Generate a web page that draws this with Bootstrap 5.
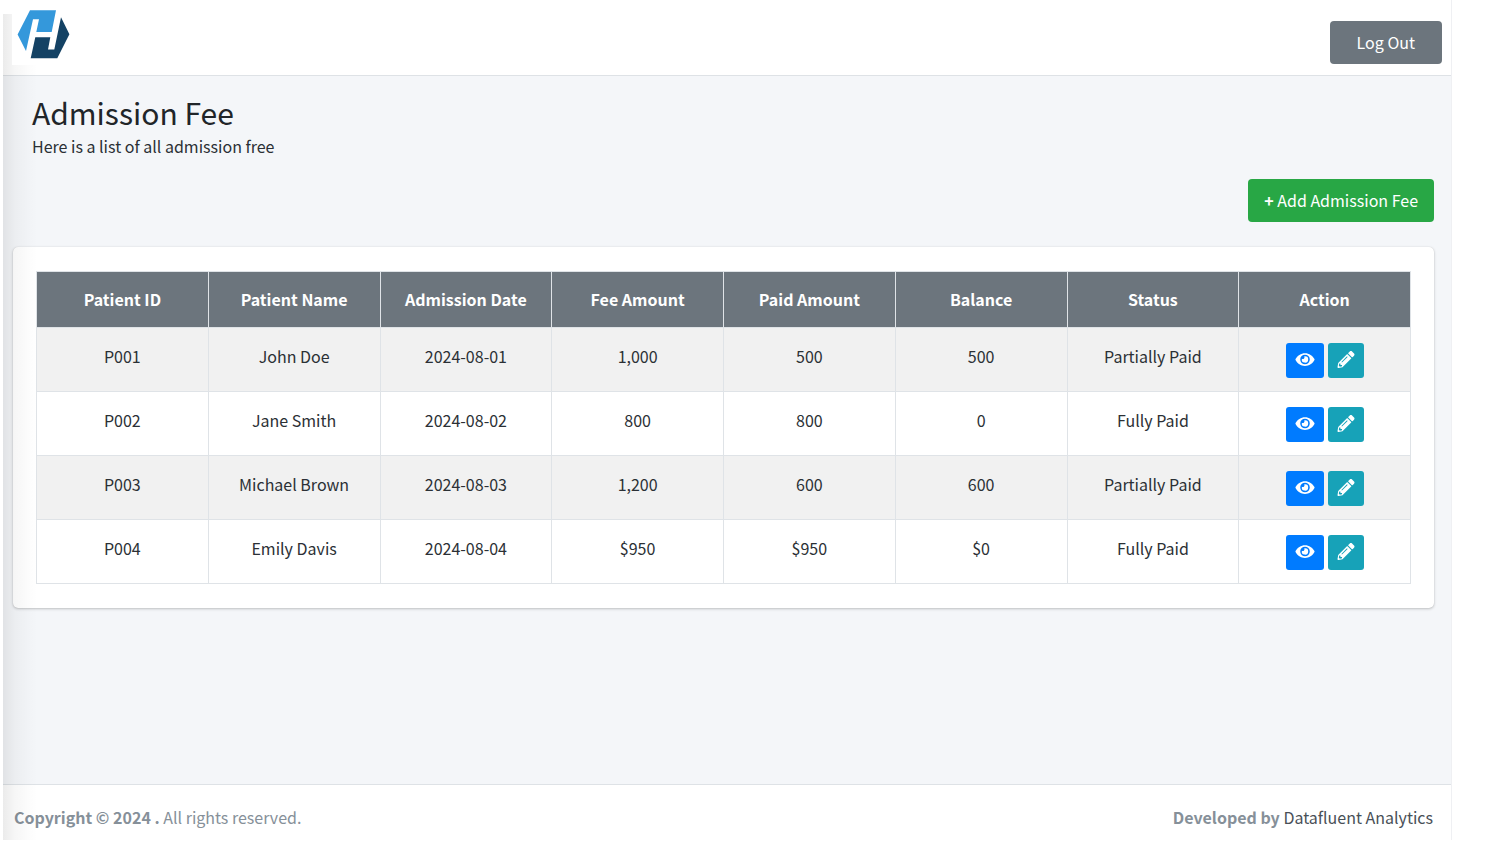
<!DOCTYPE html>
<html lang="en">
<head>
<meta charset="utf-8">
<meta name="viewport" content="width=device-width, initial-scale=1">
<title>Admission Fee</title>
<link href="https://cdn.jsdelivr.net/npm/bootstrap@5.3.0/dist/css/bootstrap.min.css" rel="stylesheet">
<style>
  body { font-family: "Noto Sans CJK SC", "Liberation Sans", sans-serif; font-size: 16px; line-height: 27px; color: #2b3035; background: #fff; }
  .app-shell { position: relative; min-height: calc(100vh - 10px); margin: 0 33px 10px 3px; border-right: 1px solid #eff0f3; }
  /* soft shade cast by the collapsed sidebar */
  .app-shell::before { content: ""; position: absolute; z-index: 1; top: 14px; bottom: 0; left: 0; width: 34px; pointer-events: none;
    background: linear-gradient(90deg, rgba(0,0,0,.08), rgba(0,0,0,.035) 35%, rgba(0,0,0,.01) 75%, transparent); }
  .app-header { height: 76px; border-bottom: 1px solid #dee2e6; padding: 10px 9px 0 9px; }
  .brand-link { position: relative; z-index: 2; background: #fff; width: 62px; height: 55px; padding-left: 5px; }
  .app-main { background: #f4f6f9; padding: 15px 17px 0 10px; }
  .page-intro { padding-left: 19px; margin-bottom: 19px; }
  .page-title { font-size: 30px; line-height: 42px; font-weight: 400; margin: 0; color: #212529; }
  .page-actions { margin-bottom: 25px; }
  .btn-app { --bs-btn-font-size: 16px; --bs-btn-line-height: 27px; --bs-btn-border-radius: 4px; --bs-btn-padding-y: 7px; color: #fff; }
  .btn-logout { --bs-btn-padding-x: 26px; --bs-btn-bg: #6c757d; margin-top: 11px; }
  .btn-add { --bs-btn-padding-x: 15px; --bs-btn-bg: #28a745; }
  .fee-panel { border: 0; border-radius: 5px; padding: 24px 23px; box-shadow: 0 0 1px rgba(0,0,0,.14), 0 1px 3px rgba(0,0,0,.22); }
  .fee-table { table-layout: fixed; text-align: center; border-color: #dfe3e7; margin: 0; --bs-table-color: #2b3035; }
  .fee-table th { background: #6c757d; color: #fff; padding: 14px 8px; font-weight: 700; }
  .fee-table td { padding: 15px 8px 13px; }
  .fee-table tbody tr:nth-child(odd) td { --bs-table-accent-bg: #f1f1f1; }
  .act-btn { height: 35px; border: 0; border-radius: 3px; color: #fff; display: flex; align-items: center; justify-content: center; padding: 0 0 2px; }
  .act-view { width: 38px; background: #007bff; }
  .act-edit { width: 36px; background: #17a2b8; }
  .app-footer { border-top: 1px solid #dee2e6; padding: 19px 18px 9px 11px; color: #869099; }
  .app-footer a { color: #495057; text-decoration: none; }
</style>
</head>
<body>
<svg class="d-none" aria-hidden="true">
  <symbol id="icon-eye" viewBox="0 0 576 512"><path fill="currentColor" d="M572.52 241.4C518.29 135.59 410.93 64 288 64S57.68 135.64 3.48 241.41a32.35 32.35 0 0 0 0 29.19C57.71 376.41 165.07 448 288 448s230.32-71.64 284.52-177.41a32.35 32.35 0 0 0 0-29.19zM288 400a144 144 0 1 1 144-144 143.93 143.93 0 0 1-144 144zm0-240a95.31 95.31 0 0 0-25.31 3.79 47.85 47.85 0 0 1-66.9 66.9A95.78 95.78 0 1 0 288 160z"/></symbol>
  <symbol id="icon-pencil" viewBox="0 0 512 512"><path fill="currentColor" d="M497.9 142.1l-46.1 46.1c-4.7 4.7-12.3 4.7-17 0l-111-111c-4.7-4.7-4.7-12.3 0-17l46.1-46.1c18.7-18.7 49.1-18.7 67.9 0l60.1 60.1c18.8 18.7 18.8 49.1 0 67.9zM284.2 99.8L21.6 362.4.4 483.9c-2.9 16.4 11.4 30.6 27.8 27.8l121.5-21.3 262.6-262.6c4.7-4.7 4.7-12.3 0-17l-111-111c-4.8-4.7-12.4-4.7-17.1 0zM124.1 339.9c-5.5-5.5-5.5-14.3 0-19.8l154-154c5.5-5.5 14.3-5.5 19.8 0s5.5 14.3 0 19.8l-154 154c-5.5 5.5-14.3 5.5-19.8 0zM88 424h48v36.3l-64.5 11.3-31.1-31.1L51.7 376H88v48z"/></symbol>
</svg>
<div class="app-shell d-flex flex-column">
  <header class="app-header d-flex justify-content-between align-items-start">
    <a class="brand-link d-block" href="#" aria-label="Home">
      <svg class="d-block" width="53" height="49" viewBox="0 0 53 49" aria-hidden="true">
        <path fill="#3498db" d="M13 .2L.6 24.5 9 41 16 9.3H22L19.3 22H34.7L39 .2Z"/>
        <path fill="#144264" d="M18.3 27.2H33.3L31 39.5H37.3L44 7.3 52.4 24.2 40.3 48.3H13.7Z"/>
      </svg>
    </a>
    <button type="button" class="btn btn-app btn-logout">Log Out</button>
  </header>
  <main class="app-main flex-grow-1">
    <div class="page-intro">
      <h1 class="page-title">Admission Fee</h1>
      <p class="mb-0">Here is a list of all admission free</p>
    </div>
    <div class="page-actions d-flex justify-content-end">
      <button type="button" class="btn btn-app btn-add"><b>+</b> Add Admission Fee</button>
    </div>
    <section class="card fee-panel">
      <table class="table table-bordered fee-table">
        <thead>
          <tr><th scope="col">Patient ID</th><th scope="col">Patient Name</th><th scope="col">Admission Date</th><th scope="col">Fee Amount</th><th scope="col">Paid Amount</th><th scope="col">Balance</th><th scope="col">Status</th><th scope="col">Action</th></tr>
        </thead>
        <tbody>
          <tr><td>P001</td><td>John Doe</td><td>2024-08-01</td><td>1,000</td><td>500</td><td>500</td><td>Partially Paid</td>
            <td><div class="d-flex justify-content-center gap-1"><button type="button" class="act-btn act-view" aria-label="View"><svg width="20" height="17"><use href="#icon-eye"/></svg></button><button type="button" class="act-btn act-edit" aria-label="Edit"><svg width="18" height="17"><use href="#icon-pencil"/></svg></button></div></td></tr>
          <tr><td>P002</td><td>Jane Smith</td><td>2024-08-02</td><td>800</td><td>800</td><td>0</td><td>Fully Paid</td>
            <td><div class="d-flex justify-content-center gap-1"><button type="button" class="act-btn act-view" aria-label="View"><svg width="20" height="17"><use href="#icon-eye"/></svg></button><button type="button" class="act-btn act-edit" aria-label="Edit"><svg width="18" height="17"><use href="#icon-pencil"/></svg></button></div></td></tr>
          <tr><td>P003</td><td>Michael Brown</td><td>2024-08-03</td><td>1,200</td><td>600</td><td>600</td><td>Partially Paid</td>
            <td><div class="d-flex justify-content-center gap-1"><button type="button" class="act-btn act-view" aria-label="View"><svg width="20" height="17"><use href="#icon-eye"/></svg></button><button type="button" class="act-btn act-edit" aria-label="Edit"><svg width="18" height="17"><use href="#icon-pencil"/></svg></button></div></td></tr>
          <tr><td>P004</td><td>Emily Davis</td><td>2024-08-04</td><td>$950</td><td>$950</td><td>$0</td><td>Fully Paid</td>
            <td><div class="d-flex justify-content-center gap-1"><button type="button" class="act-btn act-view" aria-label="View"><svg width="20" height="17"><use href="#icon-eye"/></svg></button><button type="button" class="act-btn act-edit" aria-label="Edit"><svg width="18" height="17"><use href="#icon-pencil"/></svg></button></div></td></tr>
        </tbody>
      </table>
    </section>
  </main>
  <footer class="app-footer d-flex justify-content-between">
    <div><strong>Copyright © 2024 .</strong> All rights reserved.</div>
    <div><strong>Developed by</strong> <a href="#">Datafluent Analytics</a></div>
  </footer>
</div>
<script src="https://cdn.jsdelivr.net/npm/bootstrap@5.3.0/dist/js/bootstrap.bundle.min.js"></script>
</body>
</html>
